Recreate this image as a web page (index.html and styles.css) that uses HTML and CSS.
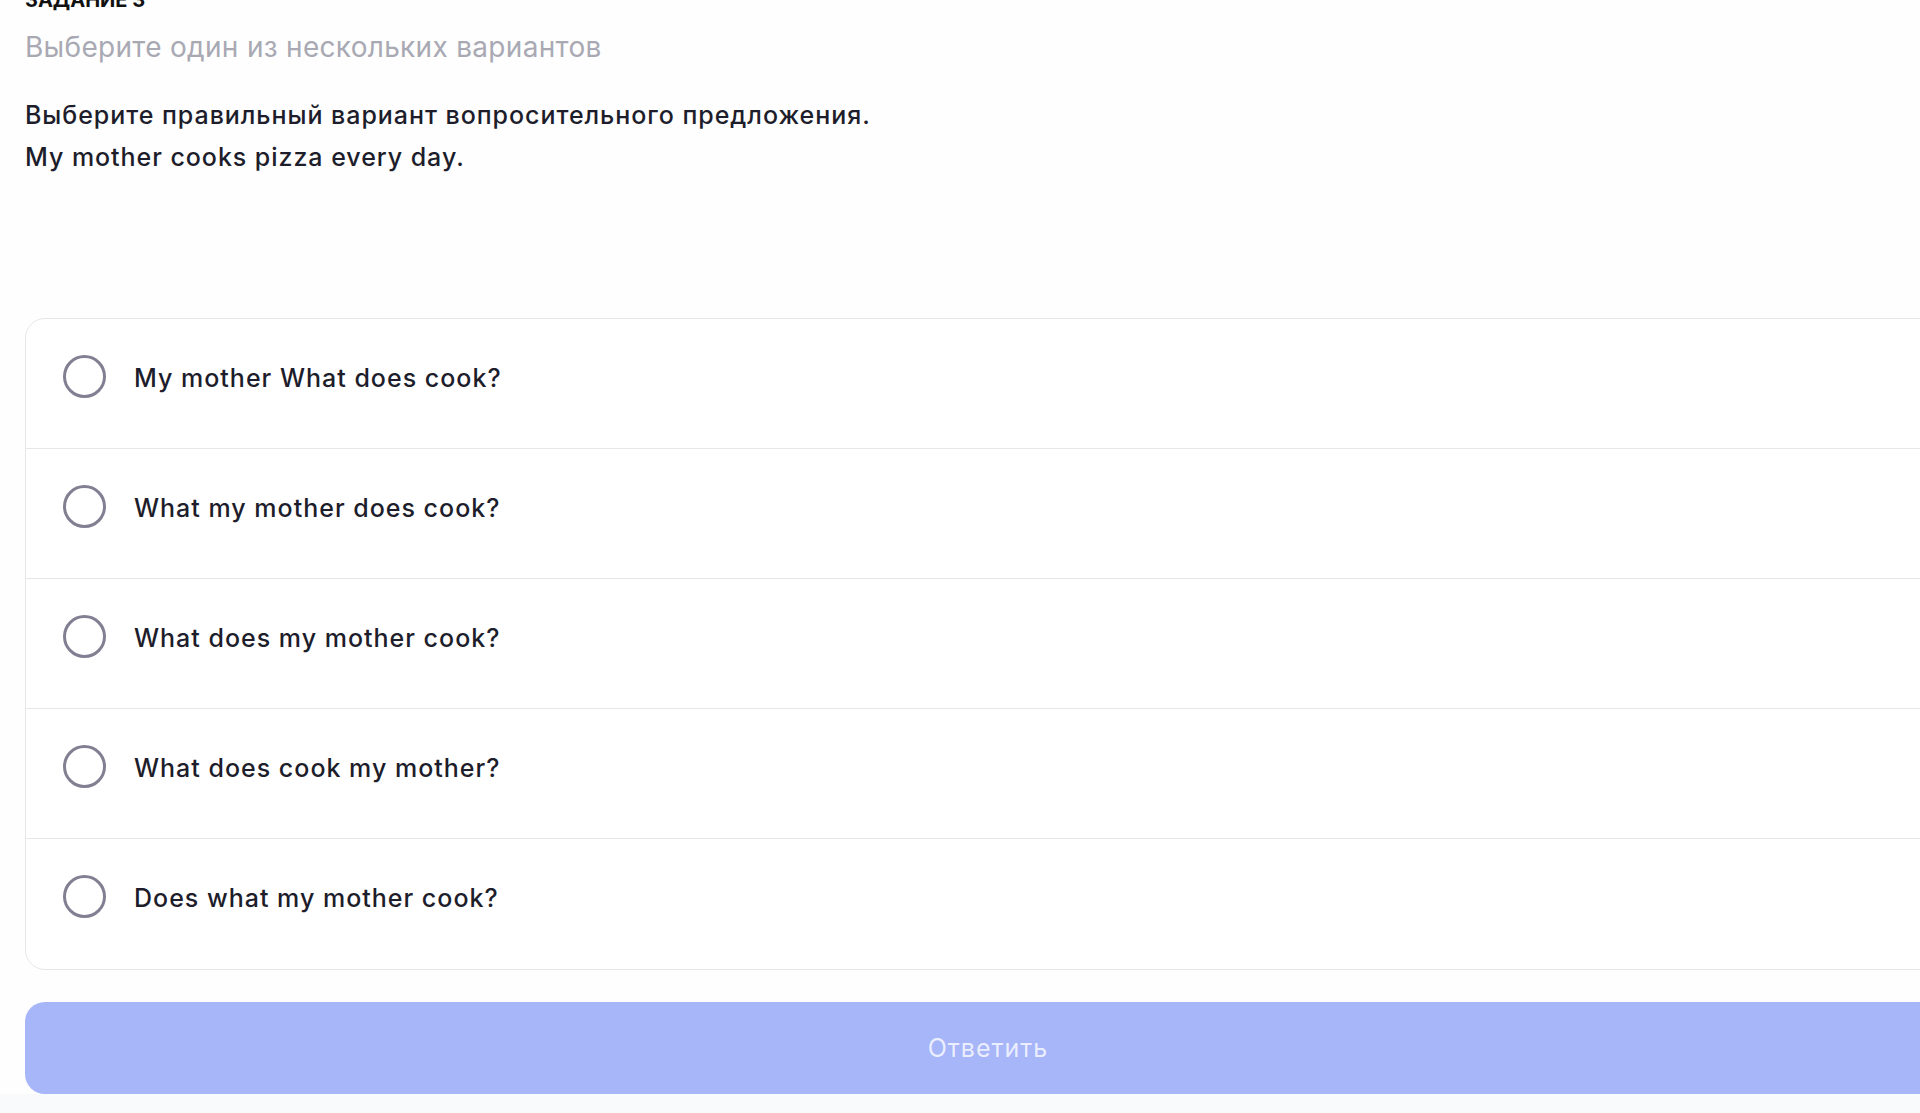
FILE: index.html
```html
<!DOCTYPE html>
<html lang="ru">
<head>
<meta charset="utf-8">
<title>Задание 3</title>
<link rel="stylesheet" href="styles.css">
</head>
<body>
<main class="task">
  <h2 class="task-title">Задание 3</h2>
  <p class="task-hint">Выберите один из нескольких вариантов</p>
  <div class="task-question">
    <p>Выберите правильный вариант вопросительного предложения.</p>
    <p>My mother cooks pizza every day.</p>
  </div>
  <ul class="options">
    <li class="option"><span class="radio"></span><span class="option-text">My mother What does cook?</span></li>
    <li class="option"><span class="radio"></span><span class="option-text">What my mother does cook?</span></li>
    <li class="option"><span class="radio"></span><span class="option-text">What does my mother cook?</span></li>
    <li class="option"><span class="radio"></span><span class="option-text">What does cook my mother?</span></li>
    <li class="option"><span class="radio"></span><span class="option-text">Does what my mother cook?</span></li>
  </ul>
  <button class="submit" type="button">Ответить</button>
</main>
<div class="page-bottom"></div>
</body>
</html>
```
FILE: styles.css
```css
html, body {
  margin: 0;
  padding: 0;
  overflow: hidden;
  background: #fefefe;
  font-family: Inter, "Noto Sans", sans-serif;
  color: #1d1d2b;
}

.task {
  box-sizing: border-box;
  width: 1951px;
  padding-left: 25px;
  margin-top: -12px;
}

.task-title {
  margin: 0;
  font-size: 20px;
  line-height: 24px;
  font-weight: 700;
  text-transform: uppercase;
  color: #111;
}

.task-hint {
  margin: 18px 0 0;
  font-size: 28px;
  line-height: 34px;
  font-weight: 400;
  letter-spacing: 0.3px;
  color: #a9a9b4;
}

.task-question {
  margin-top: 30px;
}

.task-question p {
  margin: 0;
  font-size: 25px;
  line-height: 42px;
  font-weight: 450;
  letter-spacing: 0.95px;
  color: #1d1d2b;
}

.options {
  list-style: none;
  margin: 140px 0 0;
  padding: 0;
  border: 1px solid #e7e7ea;
  border-radius: 20px;
  background: #fff;
}

.option {
  display: flex;
  align-items: flex-start;
  gap: 28px;
  height: 130px;
  box-sizing: border-box;
  padding: 36px 37px 0;
  border-bottom: 1px solid #e7e7ea;
}

.option:last-child {
  border-bottom: none;
}

.radio {
  flex: none;
  box-sizing: border-box;
  width: 43px;
  height: 43px;
  border: 3.5px solid #817f91;
  border-radius: 50%;
}

.option-text {
  font-size: 25px;
  line-height: 30px;
  font-weight: 450;
  letter-spacing: 1px;
  color: #1d1d2b;
  margin-top: 8px;
}

.submit {
  display: block;
  width: 100%;
  height: 92px;
  margin-top: 32px;
  border: none;
  border-radius: 20px;
  background: #a7b5f9;
  color: rgba(255, 255, 255, 0.78);
  font-family: Inter, "Noto Sans", sans-serif;
  font-size: 25px;
  font-weight: 400;
  letter-spacing: 1px;
  cursor: default;
}

.page-bottom {
  height: 60px;
  background: #f9fafb;
}
```
